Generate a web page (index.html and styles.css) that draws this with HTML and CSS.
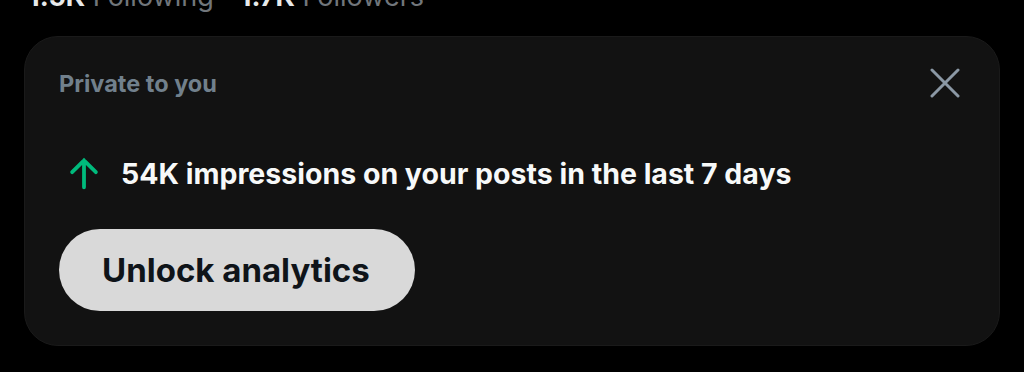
FILE: index.html
```html
<!DOCTYPE html>
<html lang="en">

<head>
  <meta charset="utf-8">
  <title>Profile analytics</title>
  <meta name="viewport" content="width=device-width, initial-scale=1">
  <link rel="stylesheet" href="styles.css">
</head>

<body>
  <div class="stats">
    <span class="stat"><b>1.5K</b> Following</span>
    <span class="stat"><b>1.7K</b> Followers</span>
  </div>

  <div class="card">
    <div class="card-head">
      <span class="private">Private to you</span>
      <button class="close" aria-label="Close">
        <svg viewBox="0 0 30 30" width="30" height="30">
          <path d="M2 2 L28 28 M28 2 L2 28" stroke="currentColor" stroke-width="3" stroke-linecap="round" fill="none" />
        </svg>
      </button>
    </div>
    <div class="insight">
      <svg class="arrow" viewBox="0 0 24 24" width="38" height="38">
        <path d="M12 21 V4 M4.5 11.5 L12 4 L19.5 11.5" stroke="currentColor" stroke-width="2.4" stroke-linecap="round" fill="none" />
      </svg>
      <span>54K impressions on your posts in the last 7 days</span>
    </div>
    <button class="btn">Unlock analytics</button>
  </div>
</body>

</html>
```

FILE: styles.css
```css
body {
  margin: 0;
  background-color: #000;
  color: #e7e9ea;
  font-family: Inter, "Noto Sans", sans-serif;
}

.stats {
  display: flex;
  gap: 26px;
  padding-left: 28px;
  margin-top: -20px;
  height: 56px;
  font-size: 27px;
  line-height: 34px;
  color: #71767b;
}

.stat b {
  color: #e7e9ea;
  font-weight: 700;
}

.card {
  margin: 0 24px;
  height: 310px;
  box-sizing: border-box;
  padding: 31px 34px 0;
  background-color: #121212;
  border: 1px solid #1a1a1a;
  border-radius: 34px;
}

.card-head {
  display: flex;
  justify-content: space-between;
  align-items: center;
}

.private {
  font-size: 23.5px;
  font-weight: 700;
  color: #71808c;
}

.close {
  background: none;
  border: none;
  padding: 0;
  margin-right: 5px;
  color: #8b98a5;
  display: flex;
}

.insight {
  display: flex;
  align-items: center;
  gap: 18px;
  margin-top: 56px;
  font-size: 28.5px;
  font-weight: 700;
  color: #f7f9f9;
}

.arrow {
  color: #00ba7c;
  margin-left: 6px;
}

.btn {
  margin-top: 37px;
  height: 82px;
  padding: 0 45px 0 43px;
  border: none;
  border-radius: 41px;
  background-color: #d9d9d9;
  color: #0f1419;
  font-family: inherit;
  font-size: 33px;
  font-weight: 700;
}
```
